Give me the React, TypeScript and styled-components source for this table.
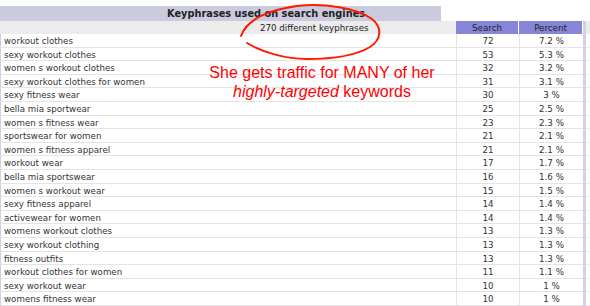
import React from 'react';
import styled, { createGlobalStyle } from 'styled-components';

const GlobalStyle = createGlobalStyle`
  html, body {
    margin: 0;
    padding: 0;
    background: #ffffff;
  }
`;

const rows: [string, number, string][] = [
  ['workout clothes', 72, '7.2 %'],
  ['sexy workout clothes', 53, '5.3 %'],
  ['women s workout clothes', 32, '3.2 %'],
  ['sexy workout clothes for women', 31, '3.1 %'],
  ['sexy fitness wear', 30, '3 %'],
  ['bella mia sportwear', 25, '2.5 %'],
  ['women s fitness wear', 23, '2.3 %'],
  ['sportswear for women', 21, '2.1 %'],
  ['women s fitness apparel', 21, '2.1 %'],
  ['workout wear', 17, '1.7 %'],
  ['bella mia sportswear', 16, '1.6 %'],
  ['women s workout wear', 15, '1.5 %'],
  ['sexy fitness apparel', 14, '1.4 %'],
  ['activewear for women', 14, '1.4 %'],
  ['womens workout clothes', 13, '1.3 %'],
  ['sexy workout clothing', 13, '1.3 %'],
  ['fitness outfits', 13, '1.3 %'],
  ['workout clothes for women', 11, '1.1 %'],
  ['sexy workout wear', 10, '1 %'],
  ['womens fitness wear', 10, '1 %'],
];

const Page = styled.div`
  position: relative;
  width: 590px;
  height: 306px;
  overflow: hidden;
  padding-top: 6px;
  box-sizing: border-box;
  font-family: 'DejaVu Sans', Verdana, sans-serif;
  color: #333333;
`;

const TitleTab = styled.div`
  width: 441px;
  height: 15px;
  background: #cbcbdf;
  font-weight: bold;
  font-size: 9.8px;
  line-height: 16px;
  color: #222222;
  padding-left: 167px;
  box-sizing: border-box;
  white-space: nowrap;
`;

const Grid = styled.div`
  display: grid;
  grid-template-columns: 456px 63px 64px 3px 1fr;
  font-size: 8.7px;
`;

const HeadCell = styled.div<{ $blue?: boolean; $indent?: number }>`
  height: 13px;
  line-height: 14px;
  background: ${(p) => (p.$blue ? '#8686d8' : '#ececec')};
  border-right: ${(p) => (p.$blue ? '1px solid #ffffff' : 'none')};
  text-align: ${(p) => (p.$blue ? 'center' : 'left')};
  padding-left: ${(p) => p.$indent ?? 0}px;
  color: #222222;
  white-space: nowrap;
  box-sizing: border-box;
`;

const Divider = styled.div`
  background: #d2d2e6;
`;

const Cell = styled.div<{ $align?: 'left' | 'center'; $edge?: boolean }>`
  height: 13.6px;
  line-height: 13px;
  padding-top: 1px;
  padding-left: ${(p) => (p.$align === 'center' ? 0 : 3)}px;
  text-align: ${(p) => p.$align ?? 'left'};
  border-bottom: 1px solid #e4e4e4;
  border-left: 1px solid ${(p) => (p.$edge ? '#d0d0e4' : '#e4e4e4')};
  box-sizing: border-box;
  white-space: nowrap;
`;

const Spare = styled.div`
  height: 13.6px;
  border-bottom: 1px solid #ececec;
  box-sizing: border-box;
`;

const Note = styled.div`
  position: absolute;
  left: 172px;
  top: 63px;
  width: 300px;
  text-align: center;
  font-family: 'Liberation Sans', Arial, sans-serif;
  font-size: 16px;
  line-height: 19px;
  color: #ff0000;
  white-space: nowrap;
  pointer-events: none;
`;

const Circle = styled.svg`
  position: absolute;
  left: 0;
  top: 0;
  pointer-events: none;
`;

export default function App() {
  return (
    <>
      <GlobalStyle />
      <Page>
        <TitleTab>Keyphrases used on search engines</TitleTab>
        <Grid>
          <HeadCell $indent={260}>270 different keyphrases</HeadCell>
          <HeadCell $blue>Search</HeadCell>
          <HeadCell $blue>Percent</HeadCell>
          <Divider />
          <HeadCell />
          {rows.map(([phrase, count, pct]) => (
            <React.Fragment key={phrase}>
              <Cell $edge>{phrase}</Cell>
              <Cell $align="center">{count}</Cell>
              <Cell $align="center">{pct}</Cell>
              <Divider />
              <Spare />
            </React.Fragment>
          ))}
        </Grid>
        <Note>
          She gets traffic for MANY of her
          <br />
          <i>highly-targeted</i> keywords
        </Note>
        <Circle width="590" height="306" viewBox="0 0 590 306">
          <path
            d="M241,36 C246,22 262,11 297,6 C325,3 357,8 372,19 C383,28 381,40 370,47 C355,56 330,59 307,59 C285,59 262,52 247,43"
            fill="none"
            stroke="#ff1a00"
            strokeWidth="2"
            strokeLinecap="round"
          />
        </Circle>
      </Page>
    </>
  );
}
